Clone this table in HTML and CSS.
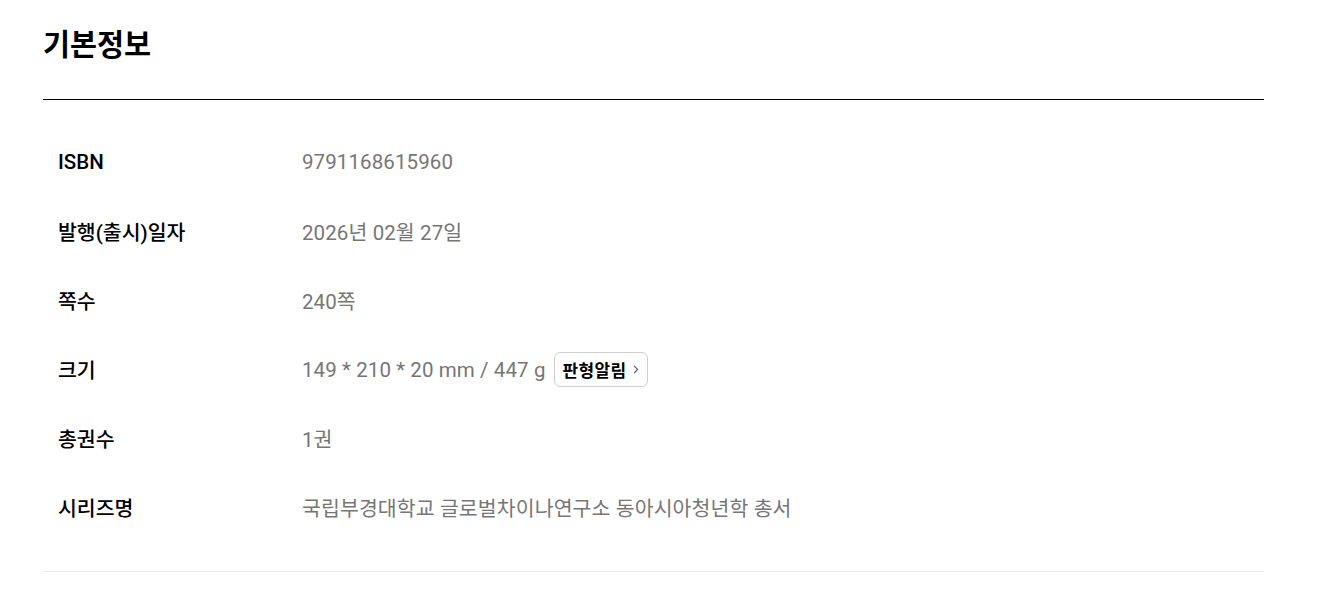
FILE: index.html
```html
<!DOCTYPE html>
<html lang="ko">
<head>
<meta charset="utf-8">
<link rel="stylesheet" href="styles.css">
</head>
<body>
<section class="info">
  <h2 class="info-title">기본정보</h2>
  <table class="info-table">
    <tbody>
      <tr><th>ISBN</th><td>9791168615960</td></tr>
      <tr><th>발행(출시)일자</th><td>2026년 02월 27일</td></tr>
      <tr><th>쪽수</th><td>240쪽</td></tr>
      <tr><th>크기</th><td><span class="size-text">149 * 210 * 20 mm / 447 g</span><button class="btn-notice" type="button">판형알림<svg class="chev" width="6" height="9" viewBox="0 0 6 9"><path d="M1.2 1L4.6 4.5L1.2 8" fill="none" stroke="#666" stroke-width="1.2"/></svg></button></td></tr>
      <tr><th>총권수</th><td>1권</td></tr>
      <tr><th>시리즈명</th><td>국립부경대학교 글로벌차이나연구소 동아시아청년학 총서</td></tr>
    </tbody>
  </table>
</section>
</body>
</html>
```
FILE: styles.css
```css
html, body {
  margin: 0;
  padding: 0;
  background: #fff;
}
body {
  font-family: Roboto, "Noto Sans CJK KR", sans-serif;
  color: #000;
}
.info {
  width: 1221px;
  margin-left: 43px;
  padding-top: 25px;
}
.info-title {
  margin: 0;
  font-size: 29.4px;
  font-weight: 700;
  line-height: 40px;
  height: 74px;
  border-bottom: 1px solid #000;
}
.info-table {
  width: 100%;
  border-collapse: collapse;
  border-bottom: 1px solid #eaeaea;
}
.info-table tbody tr:first-child th,
.info-table tbody tr:first-child td {
  padding-top: 27.5px;
}
.info-table tbody tr:last-child th,
.info-table tbody tr:last-child td {
  padding-bottom: 29.5px;
}
.info-table th {
  width: 244px;
  padding: 0 0 0 15px;
  height: 69px;
  text-align: left;
  font-size: 20.5px;
  font-weight: 500;
  color: #000;
  vertical-align: middle;
}
.info-table td {
  height: 69px;
  padding: 0;
  font-size: 20.5px;
  font-weight: 400;
  color: #767676;
  vertical-align: middle;
  letter-spacing: 0.1px;
}
.size-text {
  vertical-align: middle;
}
.btn-notice {
  display: inline-flex;
  align-items: center;
  gap: 6px;
  height: 35px;
  margin-left: 8px;
  padding: 0 8px 0 8px;
  border: 1px solid #cfcfcf;
  border-radius: 6px;
  background: #fff;
  font-family: Roboto, "Noto Sans CJK KR", sans-serif;
  font-size: 17px;
  font-weight: 700;
  letter-spacing: 0.4px;
  color: #000;
  vertical-align: middle;
}
```
